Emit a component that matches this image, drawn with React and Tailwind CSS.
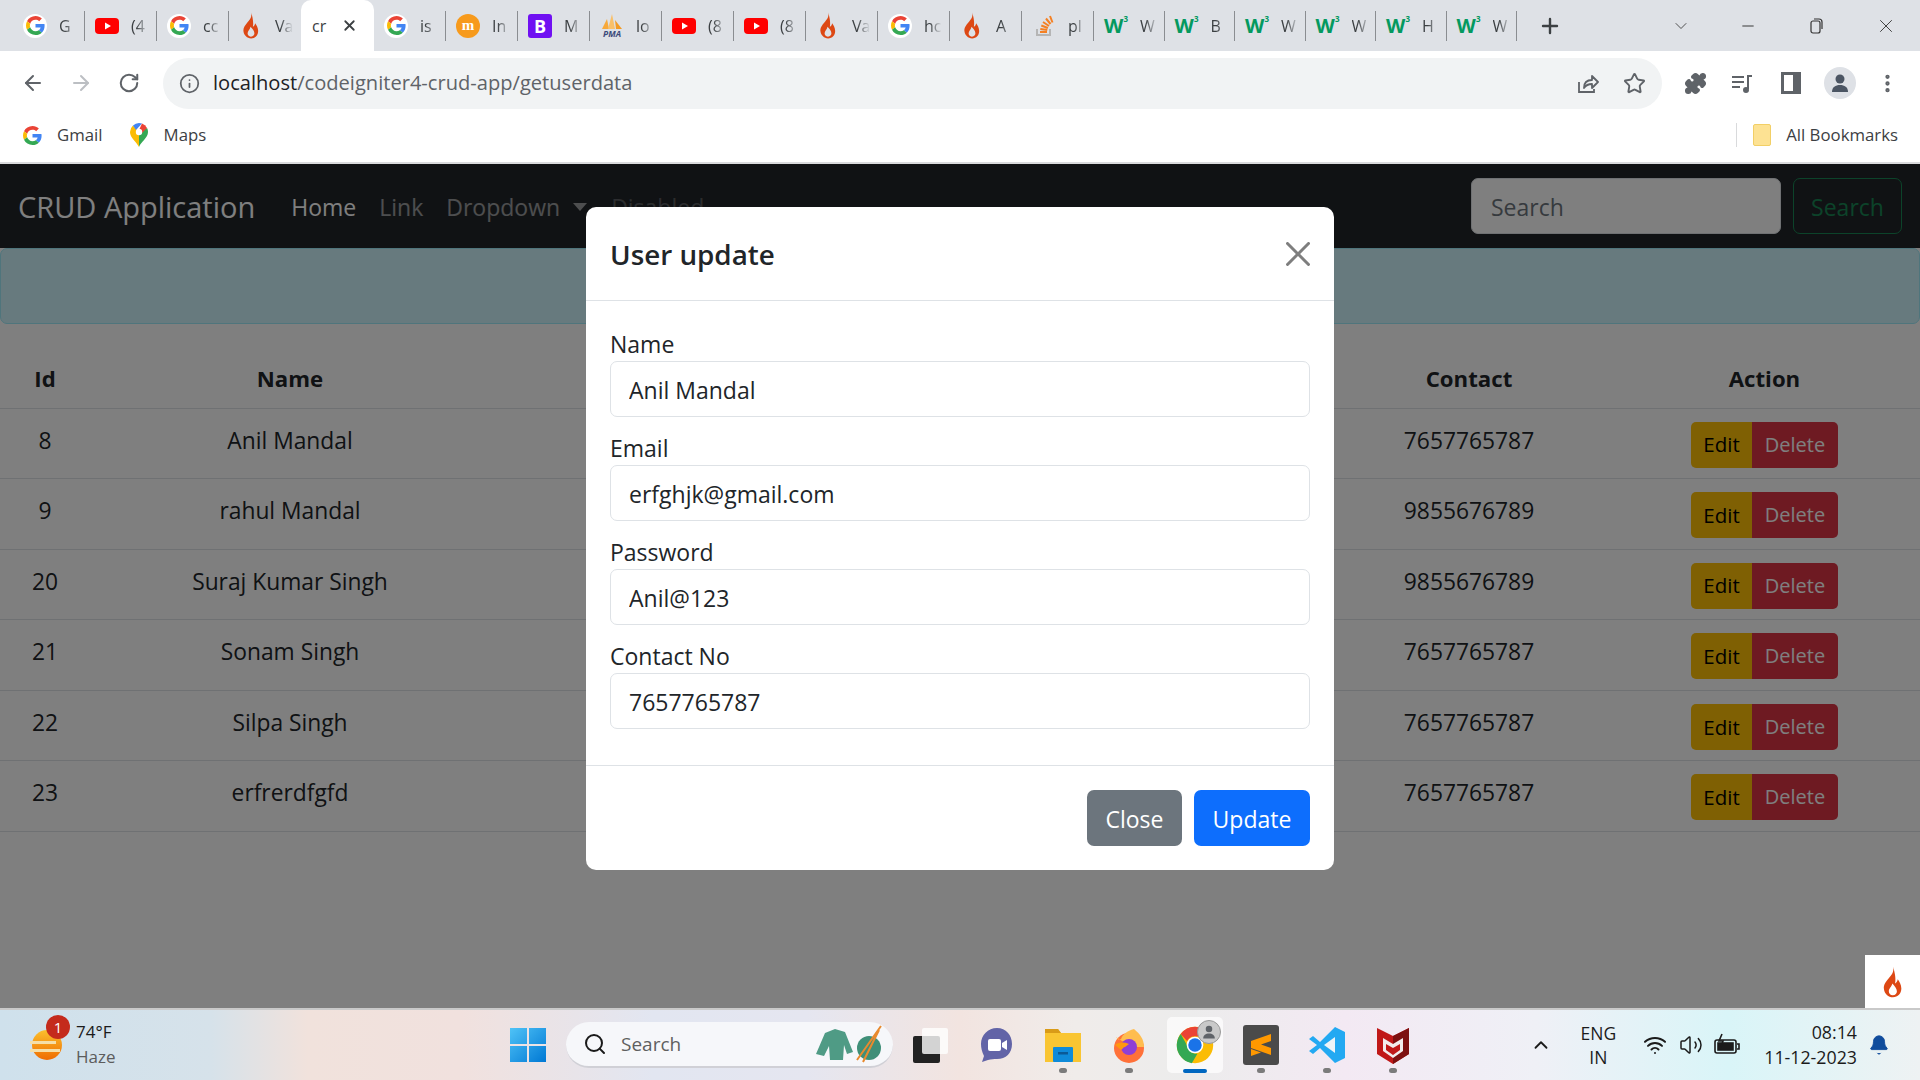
import React from "react";
import {
  ArrowLeft,
  ArrowRight,
  RotateCw,
  Info,
  Star,
  Puzzle,
  EllipsisVertical,
  ChevronDown,
  ChevronUp,
  Minus,
  X,
  Plus,
  Search,
  Volume2,
  Wifi,
  Bell,
} from "lucide-react";

const font = { fontFamily: '"Open Sans", sans-serif' };

function GoogleG({ size = 20 }) {
  return (
    <svg width={size} height={size} viewBox="0 0 48 48">
      <path fill="#EA4335" d="M24 9.5c3.54 0 6.71 1.22 9.21 3.6l6.85-6.85C35.9 2.38 30.47 0 24 0 14.62 0 6.51 5.38 2.56 13.22l7.98 6.19C12.43 13.72 17.74 9.5 24 9.5z" />
      <path fill="#4285F4" d="M46.98 24.55c0-1.57-.15-3.09-.38-4.55H24v9.02h12.94c-.58 2.96-2.26 5.48-4.78 7.18l7.73 6c4.51-4.18 7.09-10.36 7.09-17.65z" />
      <path fill="#FBBC05" d="M10.53 28.59c-.48-1.45-.76-2.99-.76-4.59s.27-3.14.76-4.59l-7.98-6.19C.92 16.46 0 20.12 0 24c0 3.88.92 7.54 2.56 10.78l7.97-6.19z" />
      <path fill="#34A853" d="M24 48c6.48 0 11.93-2.13 15.89-5.81l-7.73-6c-2.15 1.45-4.92 2.3-8.16 2.3-6.26 0-11.57-4.22-13.47-9.91l-7.98 6.19C6.51 42.62 14.62 48 24 48z" />
    </svg>
  );
}

function TabG() {
  return (
    <div className="w-6 h-6 rounded-full bg-white flex items-center justify-center">
      <GoogleG size={19} />
    </div>
  );
}

function YouTube() {
  return (
    <svg width="24" height="24" viewBox="0 0 24 24">
      <rect x="0" y="4" width="24" height="16" rx="4" fill="#ff0000" />
      <path d="M10 8.5v7l6-3.5z" fill="#fff" />
    </svg>
  );
}

function Flame({ size = 24 }) {
  return (
    <svg width={size * 0.75} height={size} viewBox="4.5 0.5 16 23">
      <path
        fillRule="evenodd"
        fill="#dd4814"
        d="M12.5 1c1 4-1.2 6-3.2 8.5C7.3 12 5.5 14 6 17.2 6.5 20.5 9 23 12.5 23c3.5 0 6-2.8 6-6.3 0-3-1.5-5-2.6-6.7-.2 1.5-.9 2.5-1.9 3 .8-4-.5-9-1.5-12zM12.3 21.5c-1.8 0-2.8-1.4-2.8-2.9 0-2 2-3.2 2.5-5.6 1.5 1.8 3.3 3.4 3.3 5.6 0 1.5-1 2.9-3 2.9z"
      />
    </svg>
  );
}

function TabFlame() {
  return (
    <div className="w-6 flex justify-center">
      <Flame size={27} />
    </div>
  );
}

function Pma() {
  return (
    <svg width="24" height="26" viewBox="0 0 24 26">
      <path d="M2 16 7 6l2 10z" fill="#f7a93b" />
      <path d="M8 16 12 1l3 15z" fill="#f9c069" />
      <path d="M16 16l-1-9 7 9z" fill="#f29b25" />
      <text x="12" y="24" textAnchor="middle" fontSize="8.5" fontWeight="700" fontStyle="italic" fill="#3b4a7a" style={font}>
        PMA
      </text>
    </svg>
  );
}

function StackOverflow() {
  return (
    <svg width="24" height="24" viewBox="0 0 24 24" fill="none">
      <path d="M5 15v6h13v-6" stroke="#b5b5b5" strokeWidth="2" />
      <path d="M8 18h7M8.3 15l7 1M9.3 11.5l6.6 2.5M11 8l6 4M14 4.5l4.5 5.5M18 2l2.500 6.500" stroke="#f48024" strokeWidth="2" />
    </svg>
  );
}

function W3() {
  return (
    <div className="w-6 h-6 flex items-start justify-center text-[#04995f] font-bold leading-none">
      <span className="text-[20px] mt-[2px]">W</span>
      <span className="text-[8px] mt-[1px]">3</span>
    </div>
  );
}

const tabs = [
  { icon: <TabG />, title: "G" },
  { icon: <YouTube />, title: "(4" },
  { icon: <TabG />, title: "cc" },
  { icon: <TabFlame />, title: "Va" },
  { active: true, title: "cr" },
  { icon: <TabG />, title: "is" },
  {
    icon: (
      <div className="w-6 h-6 rounded-full bg-[#f79a1c] text-white text-[15px] font-bold flex items-center justify-center leading-none" style={{ fontFamily: '"Liberation Serif", serif' }}>
        m
      </div>
    ),
    title: "In",
  },
  {
    icon: <div className="w-6 h-6 rounded-[3px] bg-[#7010f2] text-white text-[18px] font-bold flex items-center justify-center leading-none">B</div>,
    title: "M",
  },
  { icon: <Pma />, title: "lo" },
  { icon: <YouTube />, title: "(8" },
  { icon: <YouTube />, title: "(8" },
  { icon: <TabFlame />, title: "Va" },
  { icon: <TabG />, title: "hc" },
  { icon: <TabFlame />, title: "A" },
  { icon: <StackOverflow />, title: "pl" },
  { icon: <W3 />, title: "W", narrow: true },
  { icon: <W3 />, title: "B", narrow: true },
  { icon: <W3 />, title: "W", narrow: true },
  { icon: <W3 />, title: "W", narrow: true },
  { icon: <W3 />, title: "H", narrow: true },
  { icon: <W3 />, title: "W", narrow: true },
];

function TabStrip() {
  return (
    <div className="h-[51px] bg-[#dee1e6] flex items-center pl-[13px] pr-[8px] shrink-0">
      {tabs.map((t, i) =>
        t.active ? (
          <div key={i} className="w-[73px] h-[51px] bg-white rounded-t-[10px] flex items-center pl-[11px] shrink-0 text-[16px] text-[#3c4043]">
            <span className="w-[18px] overflow-hidden">{t.title}</span>
            <X size={17} strokeWidth={2.5} className="ml-[11px] text-[#3c4043]" />
          </div>
        ) : (
          <div key={i} className={`h-[30px] flex items-center pl-[10px] shrink-0 ${t.narrow ? "w-[70.5px]" : "w-[72px]"} ${tabs[i + 1]?.active ? "" : "border-r border-[#8a8d91]"}`}>
            {t.icon}
            <span className="ml-[12px] w-[18px] overflow-hidden whitespace-nowrap text-[16px] text-[#3c4043] [mask-image:linear-gradient(to_right,black_30%,transparent)]">{t.title}</span>
          </div>
        )
      )}
      <Plus size={24} strokeWidth={2.4} className="ml-[21px] text-[#3c4043] shrink-0" />
      <div className="flex-1 flex items-center justify-end text-[#333]">
        <ChevronDown size={20} strokeWidth={1} className="mr-[48px]" />
        <Minus size={18} strokeWidth={1.3} className="mr-[50px]" />
        <svg width="18" height="18" viewBox="0 0 18 18" fill="none" stroke="#333" strokeWidth="1.2" className="mr-[50px]">
          <rect x="4" y="4" width="9" height="12" rx="2" />
          <path d="M7 2h5a3 3 0 0 1 3 3v7" />
        </svg>
        <X size={22} strokeWidth={1} className="mr-[15px]" />
      </div>
    </div>
  );
}

function Toolbar() {
  return (
    <div className="h-[62px] bg-white flex items-center shrink-0 pt-[2px]">
      <ArrowLeft size={24} strokeWidth={2} className="ml-[21px] text-[#5f6368]" />
      <ArrowRight size={24} strokeWidth={2} className="ml-[24px] text-[#bcbfc3]" />
      <RotateCw size={22} strokeWidth={2.2} className="ml-[25px] text-[#5f6368]" />
      <div className="ml-[23px] w-[1499px] h-[51px] rounded-full bg-[#f1f3f4] flex items-center pl-[16px] pr-[16px]">
        <Info size={21} strokeWidth={2} className="text-[#5f6368]" />
        <div className="ml-[13px] text-[20.1px] text-[#5f6368]">
          <span className="text-[#202124]">localhost</span>/codeigniter4-crud-app/getuserdata
        </div>
        <div className="ml-auto flex items-center gap-[24px] text-[#5f6368]">
          <svg width="24" height="24" viewBox="0 0 24 24" fill="none" stroke="#5f6368" strokeWidth="1.8">
            <path d="M4 11v10h15v-3" />
            <path d="M9 17c0-5 3-8 8-8V5l6 6-6 6v-4c-3 0-6 1-8 4z" strokeLinejoin="round" />
          </svg>
          <Star size={23} strokeWidth={2} />
        </div>
      </div>
      <Puzzle size={23} fill="#5f6368" className="ml-[22px] text-[#5f6368]" />
      <svg width="24" height="24" viewBox="0 0 24 24" fill="none" stroke="#5f6368" strokeWidth="2" className="ml-[23px]">
        <path d="M2 6h12M2 11h12M2 16h8" />
        <path d="M18 18V5h4" />
        <circle cx="16" cy="19" r="2" fill="#5f6368" />
      </svg>
      <div className="ml-[27px] w-[20px] h-[22px] border-[3px] border-[#5f6368] border-r-[8px]" />
      <div className="ml-[23px] w-[32px] h-[32px] rounded-full bg-[#dee1e6] flex items-center justify-center">
        <svg width="22" height="22" viewBox="0 0 22 22" fill="#4b5563">
          <circle cx="11" cy="7" r="4.5" />
          <path d="M3 20c0-5 3.5-7 8-7s8 2 8 7z" />
        </svg>
      </div>
      <EllipsisVertical size={23} strokeWidth={2.5} className="ml-[20px] text-[#5f6368]" />
    </div>
  );
}

function MapsPin() {
  return (
    <svg width="20" height="24" viewBox="0 0 20 24">
      <path d="M10 24C7 18 1 15 1 9a9 9 0 0 1 3-6.5L10 9z" fill="#fbbc04" />
      <path d="M10 24c1.5-5 9-9 9-15 0-1.5-.4-3-1-4l-8 4z" fill="#34a853" />
      <path d="M4 2.5A9 9 0 0 1 10 0c1 0 2 .2 3 .6L7 7z" fill="#4285f4" />
      <path d="M13 .6A9 9 0 0 1 18 5l-5 5-3-3z" fill="#ea4335" />
      <circle cx="10" cy="9" r="3.2" fill="#fff" />
    </svg>
  );
}

function Bookmarks() {
  return (
    <div className="h-[51px] bg-white flex items-center shrink-0 text-[16.8px] text-[#3c4043] pl-[23px] pr-[22px] pb-[5px] border-b-2 border-[#d9dadc]">
      <GoogleG size={19} />
      <span className="ml-[15px]">Gmail</span>
      <span className="ml-[26px]"><MapsPin /></span>
      <span className="ml-[15px]">Maps</span>
      <div className="ml-auto flex items-center">
        <div className="w-px h-[24px] bg-[#d9dadc]" />
        <div className="ml-[16px] w-[18px] h-[22px] rounded-[2px] bg-[#fde293] border border-[#f2cf66]" />
        <span className="ml-[15px]">All Bookmarks</span>
      </div>
    </div>
  );
}

const users = [
  { id: 8, name: "Anil Mandal", contact: "7657765787" },
  { id: 9, name: "rahul Mandal", contact: "9855676789" },
  { id: 20, name: "Suraj Kumar Singh", contact: "9855676789" },
  { id: 21, name: "Sonam Singh", contact: "7657765787" },
  { id: 22, name: "Silpa Singh", contact: "7657765787" },
  { id: 23, name: "erfrerdfgfd", contact: "7657765787" },
];

function Navbar() {
  return (
    <nav className="h-[84px] bg-[#212529] flex items-center pl-[18px] pr-[18px] shrink-0">
      <span className="text-[29px] text-white pt-[2px]">CRUD Application</span>
      <span className="ml-[36px] text-[23px] text-white pt-[2px]">Home</span>
      <span className="ml-[23px] text-[23px] text-white/55 pt-[2px]">Link</span>
      <span className="ml-[23px] text-[23px] text-white/55 pt-[2px]">Dropdown</span>
      <span className="ml-[13px] mt-[2px] border-x-[7px] border-x-transparent border-t-[8px] border-t-white/55" />
      <span className="ml-[24px] text-[23px] text-white/25 pt-[2px]">Disabled</span>
      <div className="ml-auto flex items-center gap-[12px]">
        <input
          placeholder="Search"
          className="w-[310px] h-[56px] bg-white rounded-[7px] border border-[#dee2e6] px-[19px] pt-[2px] text-[23px] placeholder:text-[#6c757d]"
        />
        <button className="w-[109px] h-[56px] rounded-[7px] border border-[#198754] text-[#198754] text-[23px] pt-[2px]">Search</button>
      </div>
    </nav>
  );
}

function UserTable() {
  return (
    <table className="w-full table-fixed mt-[24px] text-[22.8px] text-[#212529] text-center border-collapse">
      <colgroup>
        <col className="w-[90px]" />
        <col className="w-[400px]" />
        <col />
        <col className="w-[280px]" />
        <col className="w-[311px]" />
      </colgroup>
      <thead>
        <tr className="h-[60px] border-b border-[#dee2e6] text-[22.2px] font-bold">
          <th className="pt-[2px]">Id</th>
          <th className="pt-[2px]">Name</th>
          <th></th>
          <th className="pt-[2px]">Contact</th>
          <th className="pt-[2px]">Action</th>
        </tr>
      </thead>
      <tbody>
        {users.map((u) => (
          <tr key={u.id} className="h-[70.6px] border-b border-[#dee2e6]">
            <td className="align-top pt-[15px]">{u.id}</td>
            <td className="align-top pt-[15px]">{u.name}</td>
            <td></td>
            <td className="align-top pt-[15px]">{u.contact}</td>
            <td className="align-top pt-[13px]">
              <div className="flex justify-center">
                <button className="w-[61px] h-[46px] bg-[#ffc107] rounded-l-[5px] text-[20.5px] text-black">Edit</button>
                <button className="w-[86px] h-[46px] bg-[#dc3545] rounded-r-[5px] text-[20px] text-white">Delete</button>
              </div>
            </td>
          </tr>
        ))}
      </tbody>
    </table>
  );
}

function Field({ label, value }) {
  return (
    <div>
      <label className="block h-[30px] leading-[27px] text-[23px] text-[#212529]">{label}</label>
      <input
        readOnly
        value={value}
        className="w-full h-[56px] rounded-[7px] border border-[#dee2e6] px-[18px] pt-[2px] text-[23px] text-[#212529] bg-white"
      />
    </div>
  );
}

function UpdateModal() {
  return (
    <div className="w-[748px] h-[663px] mt-[43px] bg-white rounded-[10px] flex flex-col">
      <div className="h-[94px] shrink-0 border-b border-[#dee2e6] flex items-center justify-between pl-[24px] pr-[24px]">
        <h5 className="text-[27.8px] font-semibold text-[#212529] leading-none pt-[2px]">User update</h5>
        <svg width="24" height="24" viewBox="0 0 16 16" fill="#000" className="opacity-50">
          <path d="M.293.293a1 1 0 0 1 1.414 0L8 6.586 14.293.293a1 1 0 1 1 1.414 1.414L9.414 8l6.293 6.293a1 1 0 0 1-1.414 1.414L8 9.414l-6.293 6.293a1 1 0 0 1-1.414-1.414L6.586 8 .293 1.707a1 1 0 0 1 0-1.414z" />
        </svg>
      </div>
      <div className="h-[465px] shrink-0 px-[24px] pt-[30px] flex flex-col gap-[18px] border-b border-[#dee2e6]">
        <Field label="Name" value="Anil Mandal" />
        <Field label="Email" value="erfghjk@gmail.com" />
        <Field label="Password" value="Anil@123" />
        <Field label="Contact No" value="7657765787" />
      </div>
      <div className="flex-1 flex items-center justify-end gap-[12px] pr-[24px]">
        <button className="w-[95px] h-[56px] rounded-[7px] bg-[#6c757d] text-white text-[23px] pt-[3px]">Close</button>
        <button className="w-[116px] h-[56px] rounded-[7px] bg-[#0d6efd] text-white text-[23px] pt-[3px]">Update</button>
      </div>
    </div>
  );
}

function Chrome() {
  return (
    <svg width="38" height="38" viewBox="0 0 48 48">
      <circle cx="24" cy="24" r="23" fill="#fbbc04" />
      <path d="M24 1a23 23 0 0 1 20 12H24a11 11 0 0 0-10 6L6 10A23 23 0 0 1 24 1z" fill="#ea4335" />
      <path d="M6 10l10 18a11 11 0 0 0 11 7l-7 12A23 23 0 0 1 6 10z" fill="#34a853" />
      <circle cx="24" cy="24" r="10.5" fill="#fff" />
      <circle cx="24" cy="24" r="8.5" fill="#1a73e8" />
    </svg>
  );
}

function TaskIcon({ children, dot, active }) {
  return (
    <div className={`relative w-[56px] h-[56px] flex items-center justify-center rounded-[5px] ${active ? "bg-white/70" : ""}`}>
      {children}
      {dot && <span className="absolute bottom-0 left-1/2 -translate-x-1/2 w-[8px] h-[5px] rounded-full bg-[#7b7b7b]" />}
      {active && <span className="absolute bottom-0 left-1/2 -translate-x-1/2 w-[24px] h-[4px] rounded-full bg-[#0067c0]" />}
    </div>
  );
}

function Taskbar() {
  return (
    <div className="h-[72px] shrink-0 border-t-2 border-[#c9c9c9] flex items-center bg-[linear-gradient(90deg,#cfe1ec_0%,#d6e2ea_11%,#f1e2dc_16%,#f1e1de_24%,#e2e6f1_34%,#e5e6f0_42%,#f2e4e0_50%,#f0ecea_56%,#ececec_62%,#f3e9f3_70%,#eff0f6_80%,#d9f5f8_90%,#eef2f3_100%)]">
      <div className="w-[510px] shrink-0 flex items-center pl-[30px]">
        <div className="relative w-[34px] h-[36px]">
          <div className="absolute left-[2px] top-[3px] w-[30px] h-[30px] rounded-full bg-[linear-gradient(#fbc02d,#ef6c00)]" />
          <div className="absolute left-0 top-[14px] w-[26px] h-[3px] bg-[#f5dfa8]" />
          <div className="absolute left-0 top-[22px] w-[30px] h-[3px] bg-[#f5dfa8]" />
          <div className="absolute left-[16px] top-[-12px] w-[24px] h-[24px] rounded-full bg-[#c42b1c] text-white text-[15px] flex items-center justify-center">1</div>
        </div>
        <div className="ml-[12px] text-[17px] leading-[25px] -mt-[2px]">
          <div className="text-[#1b1b1b]">74°F</div>
          <div className="text-[#5c5c5c]">Haze</div>
        </div>
      </div>
      <svg width="36" height="36" viewBox="0 0 36 36" className="shrink-0">
        <defs>
          <linearGradient id="win" x1="0" y1="0" x2="1" y2="1">
            <stop offset="0" stopColor="#4fc3f7" />
            <stop offset="1" stopColor="#0078d4" />
          </linearGradient>
        </defs>
        <path d="M0 1h17v16H0zM19 1h17v16H19zM0 19h17v16H0zM19 19h17v16H19z" fill="url(#win)" />
      </svg>
      <div className="ml-[20px] w-[327px] h-[46px] rounded-full bg-[#f6f7fa] border-b-2 border-[#d0d0d6] flex items-center pl-[17px] pr-[8px] shrink-0">
        <Search size={24} strokeWidth={2} className="text-[#1a1a1a]" />
        <span className="ml-[14px] text-[19px] text-[#5f5f5f]">Search</span>
        <svg width="72" height="40" viewBox="0 0 72 40" className="ml-auto">
          <path d="M3 30 12 9l10-4 10 3 8 20-6 2-3-9-1 15H17l-1-14-5 10z" fill="#4f9b85" />
          <circle cx="56" cy="24" r="12" fill="#3f8f78" />
          <path d="M44 36 68 2M50 38 66 6" stroke="#e98a2e" strokeWidth="2" />
        </svg>
      </div>
      <div className="ml-[19px] relative w-[36px] h-[36px] shrink-0">
        <div className="absolute left-[1px] bottom-0 w-[27px] h-[27px] bg-[#222] rounded-[2px]" />
        <div className="absolute left-[10px] top-[1px] w-[26px] h-[26px] bg-white/80 rounded-[2px]" />
      </div>
      <div className="ml-[21px] flex items-center gap-[10px] shrink-0">
        <TaskIcon>
          <svg width="36" height="36" viewBox="0 0 36 36">
            <path d="M18 1c9 0 15 7 15 16s-6 15-15 15c-3 0-6 0-9 1l-6 2 2-6C3 25 2 21 2 17 2 8 9 1 18 1z" fill="#6264a7" />
            <rect x="9" y="12" width="13" height="12" rx="2" fill="#fff" />
            <path d="M23 16l5-3v10l-5-3z" fill="#fff" />
          </svg>
        </TaskIcon>
        <TaskIcon dot>
          <svg width="38" height="38" viewBox="0 0 38 38">
            <path d="M1 3h13l3 4h20v29H1z" fill="#f9c532" />
            <path d="M1 3h13l3 4H1z" fill="#d99b18" />
            <rect x="9" y="21" width="20" height="15" rx="1" fill="#0f8bd9" />
            <rect x="14" y="26" width="10" height="2.5" fill="#0b5a96" />
          </svg>
        </TaskIcon>
        <TaskIcon dot>
          <svg width="36" height="36" viewBox="0 0 36 36">
            <circle cx="18" cy="21" r="15" fill="#ff7139" />
            <path d="M5 10c2 3 3 3 5 2 2-5 6-8 13-10 6 5 10 10 10 18H20z" fill="#ffbd4f" />
            <circle cx="18" cy="20" r="8" fill="#8f3fd6" />
            <path d="M4 18c4-3 9-3 14-1l-4 3c-2 0-2 2-4 3z" fill="#ff980e" />
          </svg>
        </TaskIcon>
        <div className="relative">
          <TaskIcon active>
            <Chrome />
          </TaskIcon>
          <div className="absolute right-[2px] top-[3px] w-[24px] h-[24px] rounded-full bg-[#c9c9c9] border border-[#999] flex items-center justify-center">
            <svg width="16" height="16" viewBox="0 0 22 22" fill="#5f6368">
              <circle cx="11" cy="7" r="4.5" />
              <path d="M3 20c0-5 3.5-7 8-7s8 2 8 7z" />
            </svg>
          </div>
        </div>
        <TaskIcon dot>
          <svg width="36" height="40" viewBox="0 0 36 40">
            <rect width="36" height="40" rx="3" fill="#4a4a4a" />
            <path d="M28 9 8 16v7l20 7v-7l-10-3.5L28 16zM8 24l10 3.5L8 31z" fill="#ff9800" />
          </svg>
        </TaskIcon>
        <TaskIcon dot>
          <svg width="36" height="38" viewBox="0 0 36 38">
            <path d="M26 1 36 6v26l-10 5-15-15-7 6-4-3 8-6-8-6 4-3 7 6z" fill="#23a9f2" />
            <path d="M26 11 15 19l11 8z" fill="#eef4f8" />
          </svg>
        </TaskIcon>
        <TaskIcon dot>
          <svg width="32" height="38" viewBox="0 0 32 38">
            <path d="M0 2l16 8 16-8v26l-16 10L0 28z" fill="#c01818" />
            <path d="M16 10l16-8v26l-16 10z" fill="#7d1010" />
            <path d="M6 12l10 6 10-6v13l-10 7-10-7z" fill="#f2ecec" />
            <path d="M9 18l7 4 7-4v6l-7 5-7-5z" fill="#c01818" />
          </svg>
        </TaskIcon>
      </div>
      <div className="flex-1 flex items-center justify-end pr-[30px] text-[#1b1b1b]">
        <ChevronUp size={22} strokeWidth={2} />
        <div className="ml-[29px] text-center text-[17.5px] leading-[24px]">
          <div>ENG</div>
          <div>IN</div>
        </div>
        <Wifi size={24} strokeWidth={2} className="ml-[27px]" />
        <Volume2 size={24} strokeWidth={1.5} className="ml-[12px]" />
        <svg width="28" height="24" viewBox="0 0 28 24" fill="none" stroke="#1b1b1b" strokeWidth="1.6" className="ml-[10px]">
          <rect x="2" y="7" width="21" height="13" rx="2" />
          <rect x="5" y="10" width="15" height="7" fill="#1b1b1b" />
          <path d="M24 11h2v5h-2" />
          <path d="M9 1 6 8h4l-2 6" stroke="#1b1b1b" />
        </svg>
        <div className="ml-[23px] text-right text-[17.8px] leading-[25px]">
          <div>08:14</div>
          <div>11-12-2023</div>
        </div>
        <Bell size={22} fill="#0f4c9c" strokeWidth={1} className="ml-[11px] text-[#0f4c9c]" />
      </div>
    </div>
  );
}

export default function App() {
  return (
    <div className="w-full h-screen flex flex-col overflow-hidden bg-white" style={font}>
      <TabStrip />
      <Toolbar />
      <Bookmarks />
      <div className="relative flex-1 overflow-hidden bg-white">
        <Navbar />
        <div className="h-[76px] bg-[#cff4fc] border border-[#9eeaf9] rounded-[7px]" />
        <UserTable />
        {/* modal backdrop */}
        <div className="absolute inset-0 bg-black/50 flex justify-center items-start">
          <UpdateModal />
        </div>
        {/* debug toolbar button sits above the backdrop */}
        <div className="absolute right-0 bottom-0 w-[55px] h-[53px] bg-white flex items-center justify-center">
          <Flame size={32} />
        </div>
      </div>
      <Taskbar />
    </div>
  );
}
